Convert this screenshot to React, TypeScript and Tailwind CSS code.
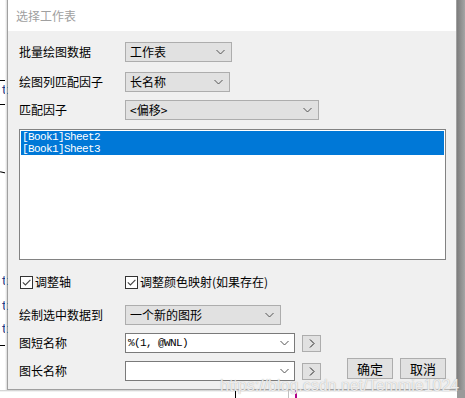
import { type ReactNode } from 'react';

const cjk = { fontFamily: '"Noto Sans CJK SC", "Microsoft YaHei", sans-serif' };
const mono = { fontFamily: '"Liberation Mono", "Noto Sans CJK SC", monospace' };

const Chevron = () => (
  <svg width="9" height="6" viewBox="0 0 9 6" className="shrink-0">
    <path d="M0.5 1 L4.5 5 L8.5 1" fill="none" stroke="#555" strokeWidth="1" />
  </svg>
);

const Select = ({ value, width }: { value: string; width: string }) => (
  <div
    className={`flex h-[20px] items-center justify-between border border-[#adadad] bg-[#e1e1e1] pl-[4px] pr-[6px] text-[12px] text-black ${width}`}
  >
    <span className="leading-none">{value}</span>
    <Chevron />
  </div>
);

const Combo = ({ value }: { value?: string }) => (
  <div className="flex h-[20px] w-[170px] items-center justify-between border border-[#7a7a7a] bg-white pl-[2px] pr-[5px]">
    <span className="text-[11px] tracking-[-0.6px] text-black" style={mono}>
      {value}
    </span>
    <Chevron />
  </div>
);

const SmallButton = () => (
  <div className="ml-[7px] flex h-[17px] w-[19px] items-center justify-center border border-[#adadad] bg-[#e1e1e1]">
    <svg width="6" height="9" viewBox="0 0 6 9">
      <path d="M1 0.5 L5 4.5 L1 8.5" fill="none" stroke="#222" strokeWidth="1" />
    </svg>
  </div>
);

const Checkbox = () => (
  <div className="flex h-[13px] w-[13px] items-center justify-center border border-[#333] bg-white">
    <svg width="9" height="7" viewBox="0 0 9 7">
      <path d="M0.8 3.4 L3.4 6 L8.4 0.8" fill="none" stroke="#444" strokeWidth="1.1" />
    </svg>
  </div>
);

const Row = ({ label, children, className = '' }: { label: string; children: ReactNode; className?: string }) => (
  <div className={`flex items-center ${className}`}>
    <div className="w-[106px] text-[12px] text-black">{label}</div>
    {children}
  </div>
);

const DlgButton = ({ text }: { text: string }) => (
  <div className="flex h-[21px] w-[46px] items-center justify-center border border-[#adadad] bg-[#e1e1e1] text-[13px] leading-none text-black">
    {text}
  </div>
);

export default function App() {
  return (
    <div className="relative flex h-[398px] w-[465px] flex-col overflow-hidden bg-white" style={cjk}>
      <div className="flex h-[390px]">
        {/* window behind the dialog, left edge */}
        <div className="relative w-[7px] bg-white">
          <div className="absolute left-0 top-[80px] h-px w-[7px] bg-black" />
          <div className="absolute left-0 top-[104px] h-px w-[7px] bg-black" />
          <div className="absolute left-[1px] top-[84px] text-[13px] leading-none text-[#1a3c8a]" style={mono}>t</div>
          <div className="absolute left-0 top-[172px] h-px w-[7px] rotate-12 bg-black" />
          <div className="absolute left-[1px] top-[275px] text-[13px] leading-none text-[#1a3c8a]" style={mono}>t</div>
          <div className="absolute left-[1px] top-[300px] text-[13px] leading-none text-[#1a3c8a]" style={mono}>t</div>
          <div className="absolute left-[1px] top-[323px] text-[13px] leading-none text-[#1a3c8a]" style={mono}>t</div>
          <div className="absolute left-0 top-[345px] h-px w-[7px] bg-black" />
          <div className="absolute right-0 top-0 h-full w-[2px] bg-gradient-to-r from-white to-[#d8d8d8]" />
        </div>

        {/* dialog */}
        <div className="flex w-[450px] flex-col border-x border-b border-[#a0a0a0] bg-[#f0f0f0]">
          <div className="flex h-[31px] items-center bg-white pl-[8px] text-[12px] text-[#a0a0a0]">选择工作表</div>

          <div className="flex flex-col pl-[11px]">
            <Row label="批量绘图数据" className="mt-[11px]">
              <Select value="工作表" width="w-[107px]" />
            </Row>
            <Row label="绘图列匹配因子" className="mt-[10px]">
              <Select value="长名称" width="w-[105px]" />
            </Row>
            <Row label="匹配因子" className="mt-[8px]">
              <Select value="<偏移>" width="w-[194px]" />
            </Row>

            <div className="mt-[9px] h-[131px] w-[427px] border border-[#828282] bg-white p-px">
              <div className="bg-[#0078d7] pl-[1px] text-[11px] leading-[12px] tracking-[-0.6px] text-white" style={mono}>
                <div>[Book1]Sheet2</div>
                <div>[Book1]Sheet3</div>
              </div>
            </div>

            <div className="mt-[13px] flex items-center text-[12px] text-black">
              <div className="flex w-[106px] items-center gap-[2px] pl-px">
                <Checkbox />
                <span>调整轴</span>
              </div>
              <div className="flex items-center gap-[2px]">
                <Checkbox />
                <span>调整颜色映射(如果存在)</span>
              </div>
            </div>

            <Row label="绘制选中数据到" className="mt-[14px]">
              <Select value="一个新的图形" width="w-[156px]" />
            </Row>
            <Row label="图短名称" className="mt-[8px]">
              <Combo value="%(1, @WNL)" />
              <SmallButton />
            </Row>
            <div className="mt-[8px] flex items-start">
              <div className="flex items-center">
                <div className="w-[106px] text-[12px] text-black">图长名称</div>
                <Combo />
                <SmallButton />
              </div>
              <div className="-mt-[3px] ml-[26px] flex gap-[7px]">
                <DlgButton text="确定" />
                <DlgButton text="取消" />
              </div>
            </div>
          </div>
        </div>

        {/* shadow on the right */}
        <div className="w-[8px] bg-gradient-to-r from-[#7d7d7d] to-[#a5a5a5]" />
      </div>

      {/* strip below the dialog */}
      <div className="relative flex-1 bg-white">
        <div className="absolute left-0 top-0 h-[2px] w-full bg-gradient-to-b from-[#c8c8c8] to-white" />
        <div className="absolute left-[235px] top-0 h-full w-px bg-black" />
        <div className="absolute left-[288px] top-0 h-full w-px bg-[#c0c0c0]" />
        <div className="absolute left-[295px] top-0 h-full w-[2px] bg-[#b0008a]" />
        <div className="absolute right-0 top-0 h-full w-[8px] bg-[#9a9a9a]" />
      </div>

      {/* watermark */}
      <div
        className="pointer-events-none absolute left-[220px] top-[378px] text-[16px] leading-none text-white/80 [text-shadow:0_0_1px_#9a9a9a]"
        style={{ fontFamily: '"Liberation Sans", Arial, sans-serif' }}
      >
        https://blog.csdn.net/Temmie1024
      </div>
    </div>
  );
}
